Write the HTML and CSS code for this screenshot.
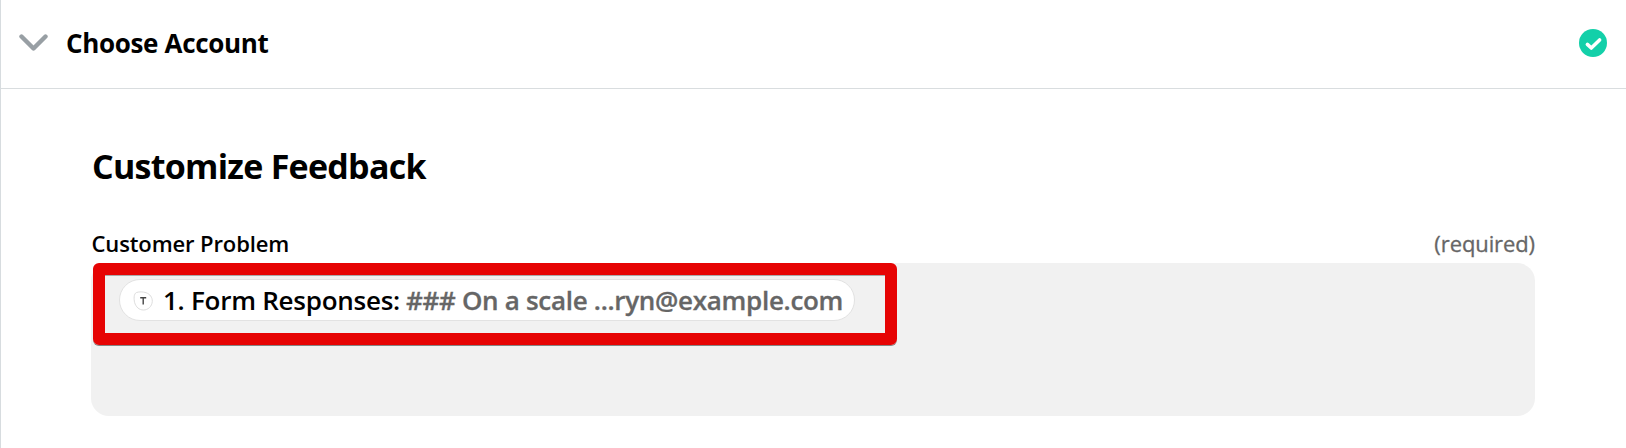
FILE: index.html
```html
<!DOCTYPE html>
<html lang="en">
<head>
<meta charset="utf-8">
<title>Customize Feedback</title>
<link rel="stylesheet" href="styles.css">
</head>
<body>
<main class="panel">
  <header class="step">
    <svg class="chevron" viewBox="0 0 30 18"><path d="M2.5 2.5 14.5 14.5 26.5 2.5"/></svg>
    <h2 class="step-title"><span>Choose Account</span></h2>
    <svg class="check" viewBox="0 0 28 28"><circle cx="14" cy="14" r="14"/><path d="M8.4 15.4 12.3 19 20.6 11"/></svg>
  </header>
  <section class="content">
    <h1 class="title"><span>Customize Feedback</span></h1>
    <div class="labels"><label class="label">Customer Problem</label><span class="required">(required)</span></div>
    <div class="field">
      <div class="highlight">
        <div class="pill">
          <svg class="badge" viewBox="0 0 20 20"><path class="badge-ring" d="M3.5 1.5C6 .7 10 .6 13 1.7 17 3 19.4 6.5 19.3 10.300 19 15.500 15 19 10.500 19 6 19 3 16 1.600 11.500.900 8 .500 3 3.500 1.500Z"/><path class="badge-letter" d="M7.200 6.700h6M10.200 6.700v6.800"/></svg>
          <span class="pill-name">1. Form Responses:</span>
          <span class="pill-value">### On a scale ...ryn@example.com</span>
        </div>
      </div>
    </div>
  </section>
</main>
</body>
</html>
```
FILE: styles.css
```css
* { box-sizing: border-box; }
body { margin: 0; background: #fff; color: #000; font-family: "Open Sans", sans-serif; }
.panel { height: 448px; border-left: 1px solid #d7dcdf; overflow: hidden; }
.step { display: flex; align-items: center; height: 89px; padding: 0 18px; border-bottom: 1px solid #d9dddf; }
.chevron { width: 30px; height: 18px; margin-top: -3px; fill: none; stroke: #989fa4; stroke-width: 4.4; stroke-linecap: round; stroke-linejoin: round; }
.step-title { flex: 1; margin: -2px 0 0 17px; font-size: 26px; font-weight: 700; line-height: 36px; letter-spacing: -.33px; }
.check { width: 28px; height: 28px; margin: -3px 1px 0 0; }
.check circle { fill: #13d0a9; }
.check path { fill: none; stroke: #fff; stroke-width: 3.6; stroke-linecap: round; stroke-linejoin: round; }
.content { padding: 53px 91px 0 90px; }
.title { margin: 0 0 0 1px; font-size: 34px; font-weight: 700; line-height: 48px; letter-spacing: -.73px; }
.labels { display: flex; justify-content: space-between; margin-top: 37px; height: 36px; font-size: 22px; line-height: 32px; }
.label { margin-left: .5px; font-weight: 600; letter-spacing: -.12px; }
.required { color: #666; letter-spacing: -.1px; -webkit-text-stroke: .3px #666; }
.field { height: 153px; border-radius: 18px; background: #f1f1f1; }
.highlight { width: 804px; height: 82px; margin-left: 2px; padding: 4px 14px; border: 12px solid #e60404; border-radius: 6px; box-shadow: 0 1px 0 #858585, inset 0 1px 0 #aaa; }
.pill { display: flex; align-items: center; width: 736px; height: 42px; padding-left: 13px; border: 1px solid #e2e2e2; border-radius: 21px; background: #fff; font-size: 26px; font-weight: 600; line-height: 36px; white-space: nowrap; }
.badge { width: 20px; height: 20px; margin: 2px 10px 0 0; fill: none; }
.badge-ring { stroke: #ddd; }
.badge-letter { stroke: #444; stroke-width: 1.4; }
.pill-name { letter-spacing: -.25px; }
.pill-value { margin-left: 6px; color: #666; letter-spacing: -.3px; -webkit-text-stroke: .3px #666; }
```
